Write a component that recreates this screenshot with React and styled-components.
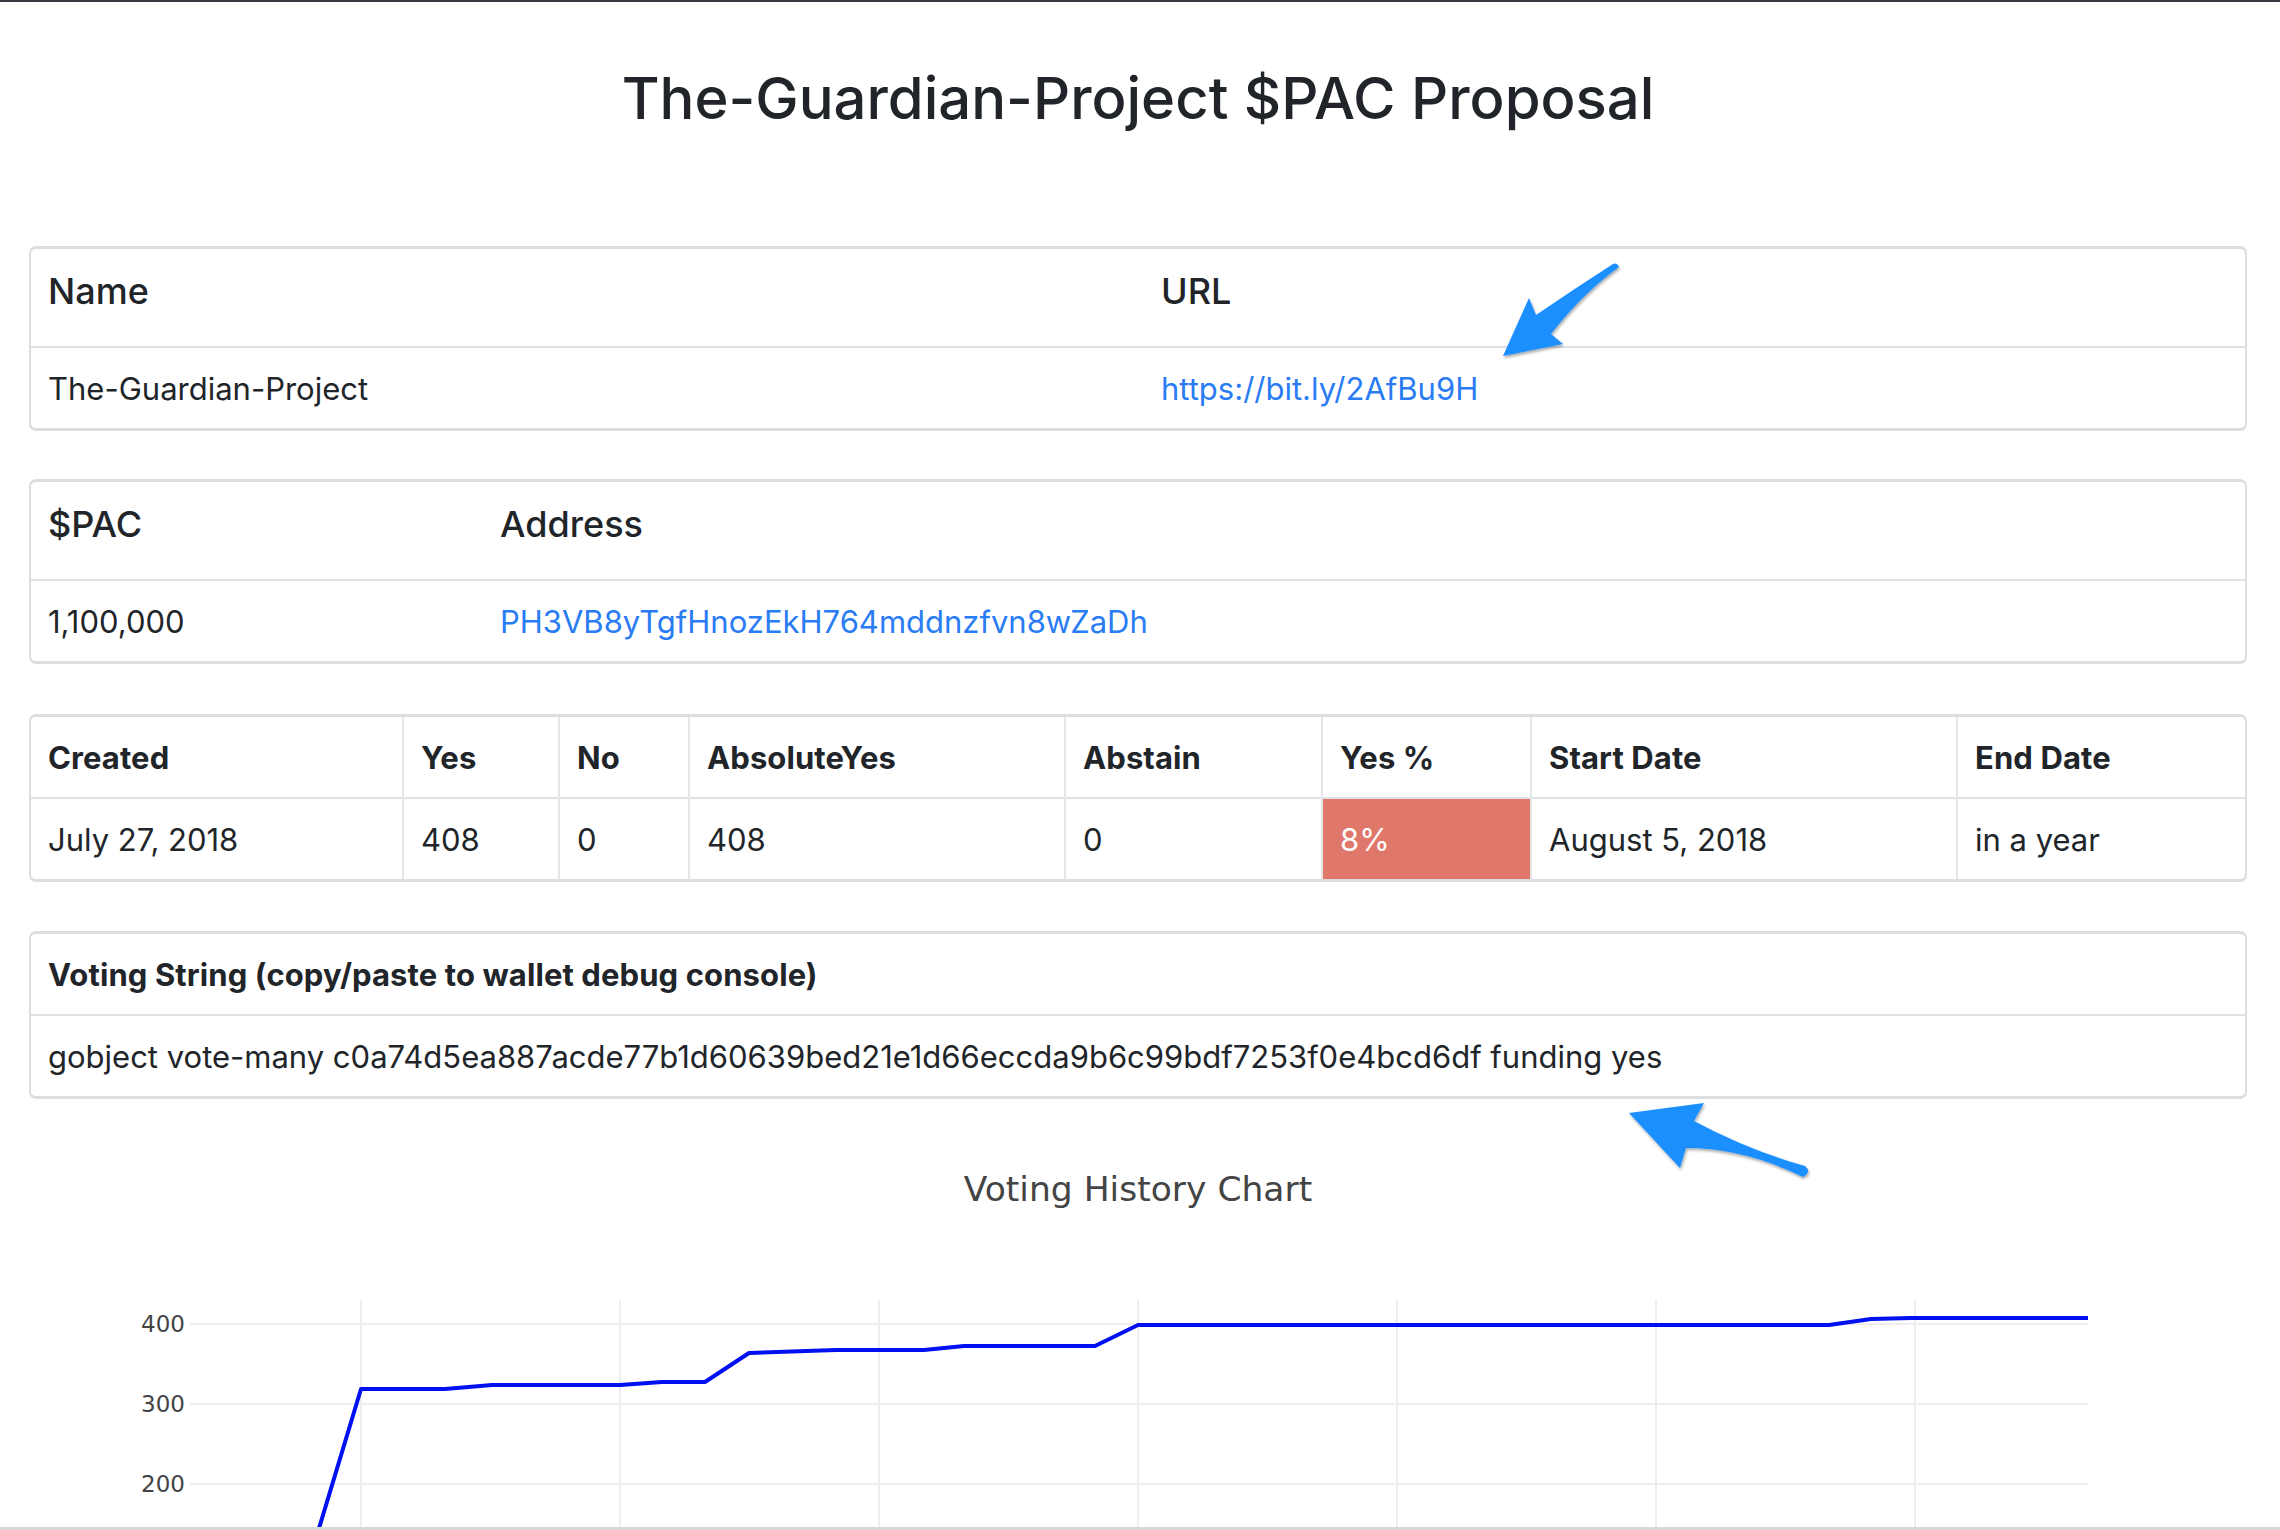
import React from "react";
import { styled, createGlobalStyle } from "styled-components";

const GlobalStyle = createGlobalStyle`
  html, body {
    margin: 0;
    padding: 0;
    overflow: hidden;
    background: #fff;
  }
  body {
    font-family: Inter, "Liberation Sans", Arial, sans-serif;
    color: #212529;
  }
`;

const Page = styled.div`
  position: relative;
  box-sizing: border-box;
  height: 1530px;
  overflow: hidden;
  padding: 0 33px 0 29px;
  border-top: 2px solid #343a40;
  border-bottom: 3px solid #d8d8d8;
`;

const Title = styled.h1`
  margin: 60px 0 0;
  font-size: 58px;
  line-height: 72px;
  font-weight: 500;
  text-align: center;
  color: #212529;
`;

const Card = styled.div`
  margin-top: ${(p) => p.$top}px;
  border: solid #dcdde0;
  border-width: 3px 2px 3px 2px;
  border-radius: 7px;
  overflow: hidden;
`;

const Table = styled.table`
  width: 100%;
  border-collapse: collapse;
  table-layout: fixed;
`;

const Head = styled.th`
  box-sizing: border-box;
  height: ${(p) => p.$h}px;
  padding: ${(p) => (p.$big ? "0 17px 14px" : "0 17px")};
  text-align: left;
  vertical-align: middle;
  font-size: ${(p) => (p.$big ? "36px" : "31px")};
  font-weight: ${(p) => (p.$big ? 500 : 700)};
  letter-spacing: ${(p) => (p.$big ? "0" : "0.1px")};
  white-space: nowrap;
  border-left: ${(p) => (p.$ruled ? "2px solid #e4e5e7" : "none")};
  &:first-child {
    border-left: none;
  }
`;

const Cell = styled.td`
  box-sizing: border-box;
  height: ${(p) => p.$h}px;
  padding: 0 17px;
  vertical-align: middle;
  font-size: 31px;
  white-space: nowrap;
  border-top: 2px solid #dee2e6;
  border-left: ${(p) => (p.$ruled ? "2px solid #e4e5e7" : "none")};
  background: ${(p) => (p.$danger ? "#df776a" : "transparent")};
  color: ${(p) => (p.$danger ? "#fff" : "#212529")};
  &:first-child {
    border-left: none;
  }
`;

const Link = styled.a`
  color: #2a7cf5;
  text-decoration: none;
`;

const ChartTitle = styled.div`
  margin-top: 71px;
  font-family: "DejaVu Sans", Verdana, sans-serif;
  font-size: 34.5px;
  line-height: 38px;
  color: #444;
  text-align: center;
`;

const ChartWrap = styled.div`
  margin: 20px -33px 0 -29px;
  svg {
    display: block;
  }
`;

const Overlay = styled.svg`
  position: absolute;
  top: -2px;
  left: 0;
  pointer-events: none;
`;

const stats = [
  { label: "Created", value: "July 27, 2018", w: 372 },
  { label: "Yes", value: "408", w: 156 },
  { label: "No", value: "0", w: 130 },
  { label: "AbsoluteYes", value: "408", w: 376 },
  { label: "Abstain", value: "0", w: 257 },
  { label: "Yes %", value: "8%", w: 209, danger: true },
  { label: "Start Date", value: "August 5, 2018", w: 426 },
  { label: "End Date", value: "in a year" },
];

const votes = [
  [298, 1600],
  [361, 1391],
  [445, 1391],
  [492, 1387],
  [620, 1387],
  [662, 1384],
  [705, 1384],
  [749, 1355],
  [836, 1352],
  [924, 1352],
  [964, 1348],
  [1095, 1348],
  [1138, 1327],
  [1829, 1327],
  [1871, 1321],
  [1911, 1320],
  [2088, 1320],
];

const gridX = [361, 620, 879, 1138, 1397, 1656, 1915];
const gridY = [
  { v: "400", y: 1326 },
  { v: "300", y: 1406 },
  { v: "200", y: 1486 },
];

const Chart = () => (
  <ChartWrap>
    <svg width="2280" height="420" viewBox="0 1230 2280 420">
      {gridX.map((x) => (
        <line key={x} x1={x} x2={x} y1="1302" y2="1650" stroke="#eee" strokeWidth="2" />
      ))}
      <line x1="190" x2="2088" y1="1566" y2="1566" stroke="#eee" strokeWidth="2" />
      {gridY.map((g) => (
        <g key={g.v}>
          <line x1="190" x2="2088" y1={g.y} y2={g.y} stroke="#eee" strokeWidth="2" />
          <text
            x="185"
            y={g.y + 8}
            textAnchor="end"
            fontFamily="'DejaVu Sans', Verdana, sans-serif"
            fontSize="23"
            fill="#444"
          >
            {g.v}
          </text>
        </g>
      ))}
      <polyline
        points={votes.map((p) => p.join(",")).join(" ")}
        fill="none"
        stroke="#0010f0"
        strokeWidth="4"
        strokeLinejoin="round"
      />
    </svg>
  </ChartWrap>
);

const Arrows = () => (
  <Overlay width="2280" height="1530" viewBox="0 0 2280 1530">
    <defs>
      <filter id="shade" x="-20%" y="-20%" width="140%" height="140%">
        <feDropShadow dx="1" dy="2" stdDeviation="1.5" floodColor="#000" floodOpacity="0.35" />
      </filter>
    </defs>
    <g fill="#1e8fff" filter="url(#shade)">
      <path d="M1613 264 Q1617 262 1619 267 Q1583 293 1551 334 L1563 344 L1503 356 L1529 298 L1536 315 Q1574 289 1613 264 Z" />
      <path d="M1629 1113 L1704 1103 L1694 1121 Q1748 1150 1805 1166 Q1812 1172 1803 1177 Q1744 1148 1686 1148 L1680 1168 Z" />
    </g>
  </Overlay>
);

const App = () => {
  return (
    <>
      <GlobalStyle />
      <Page>
        <Title>The-Guardian-Project $PAC Proposal</Title>

        <Card $top={112}>
          <Table>
            <colgroup>
              <col style={{ width: 1113 }} />
              <col />
            </colgroup>
            <thead>
              <tr>
                <Head $big $h={98}>Name</Head>
                <Head $big $h={98}>URL</Head>
              </tr>
            </thead>
            <tbody>
              <tr>
                <Cell $h={81}>The-Guardian-Project</Cell>
                <Cell $h={81}>
                  <Link href="#">https://bit.ly/2AfBu9H</Link>
                </Cell>
              </tr>
            </tbody>
          </Table>
        </Card>

        <Card $top={48}>
          <Table>
            <colgroup>
              <col style={{ width: 452 }} />
              <col />
            </colgroup>
            <thead>
              <tr>
                <Head $big $h={98}>$PAC</Head>
                <Head $big $h={98}>Address</Head>
              </tr>
            </thead>
            <tbody>
              <tr>
                <Cell $h={81}>1,100,000</Cell>
                <Cell $h={81}>
                  <Link href="#">PH3VB8yTgfHnozEkH764mddnzfvn8wZaDh</Link>
                </Cell>
              </tr>
            </tbody>
          </Table>
        </Card>

        <Card $top={50}>
          <Table>
            <colgroup>
              {stats.map((s) => (
                <col key={s.label} style={s.w ? { width: s.w } : undefined} />
              ))}
            </colgroup>
            <thead>
              <tr>
                {stats.map((s) => (
                  <Head key={s.label} $h={81} $ruled>
                    {s.label}
                  </Head>
                ))}
              </tr>
            </thead>
            <tbody>
              <tr>
                {stats.map((s) => (
                  <Cell key={s.label} $h={81} $ruled $danger={s.danger}>
                    {s.value}
                  </Cell>
                ))}
              </tr>
            </tbody>
          </Table>
        </Card>

        <Card $top={49}>
          <Table>
            <thead>
              <tr>
                <Head $h={81}>Voting String (copy/paste to wallet debug console)</Head>
              </tr>
            </thead>
            <tbody>
              <tr>
                <Cell $h={81}>
                  gobject vote-many c0a74d5ea887acde77b1d60639bed21e1d66eccda9b6c99bdf7253f0e4bcd6df funding yes
                </Cell>
              </tr>
            </tbody>
          </Table>
        </Card>

        <ChartTitle>Voting History Chart</ChartTitle>
        <Chart />
        <Arrows />
      </Page>
    </>
  );
};

export default App;
